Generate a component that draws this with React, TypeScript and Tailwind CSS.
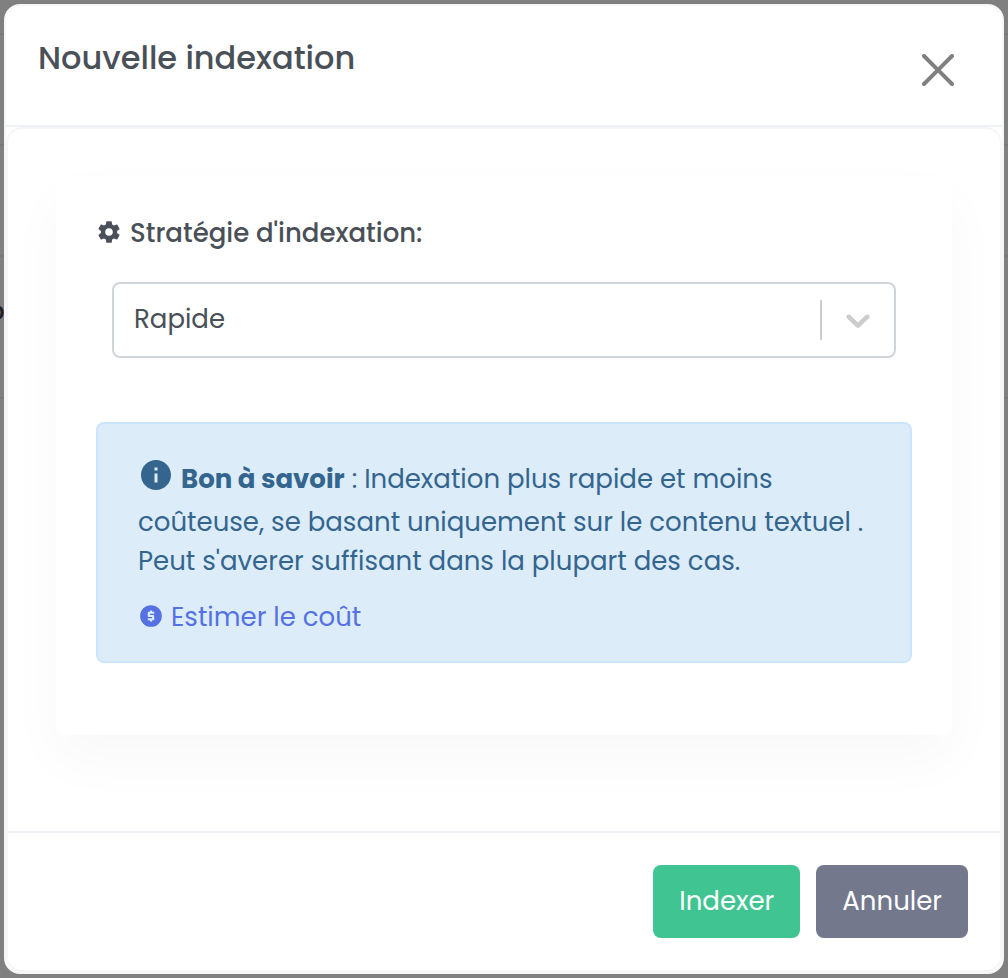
import { useState } from "react";
import { MdInfo } from "react-icons/md";

function CogIcon({ className }: { className: string }) {
  return (
    <svg viewBox="0 0 24 24" fill="currentColor" aria-hidden="true" className={className}>
      <path d="M12,15.5A3.5,3.5 0 0,1 8.5,12A3.5,3.5 0 0,1 12,8.5A3.5,3.5 0 0,1 15.5,12A3.5,3.5 0 0,1 12,15.5M19.43,12.97C19.47,12.65 19.5,12.33 19.5,12C19.5,11.67 19.47,11.34 19.43,11L21.54,9.37C21.73,9.22 21.78,8.95 21.66,8.73L19.66,5.27C19.54,5.05 19.27,4.96 19.05,5.05L16.56,6.05C16.04,5.66 15.5,5.32 14.87,5.07L14.5,2.42C14.46,2.18 14.25,2 14,2H10C9.75,2 9.54,2.18 9.5,2.42L9.13,5.07C8.5,5.32 7.96,5.66 7.44,6.05L4.95,5.05C4.73,4.96 4.46,5.05 4.34,5.27L2.34,8.73C2.21,8.95 2.27,9.22 2.46,9.37L4.57,11C4.53,11.34 4.5,11.67 4.5,12C4.5,12.33 4.53,12.65 4.57,12.97L2.46,14.63C2.27,14.78 2.21,15.05 2.34,15.27L4.34,18.73C4.46,18.95 4.73,19.03 4.95,18.95L7.44,17.94C7.96,18.34 8.5,18.68 9.13,18.93L9.5,21.58C9.54,21.82 9.75,22 10,22H14C14.25,22 14.46,21.82 14.5,21.58L14.87,18.93C15.5,18.67 16.04,18.34 16.56,17.94L19.05,18.95C19.27,19.03 19.54,18.95 19.66,18.73L21.66,15.27C21.78,15.05 21.73,14.78 21.54,14.63L19.43,12.97Z" />
    </svg>
  );
}

function DollarCircleIcon({ className }: { className: string }) {
  return (
    <svg viewBox="0 0 24 24" fill="currentColor" aria-hidden="true" className={className}>
      <path
        fillRule="evenodd"
        d="M12,2A10,10 0 0,1 22,12A10,10 0 0,1 12,22A10,10 0 0,1 2,12A10,10 0 0,1 12,2M11,17H13V16H14A1,1 0 0,0 15,15V12A1,1 0 0,0 14,11H11V10H15V8H13V7H11V8H10A1,1 0 0,0 9,9V12A1,1 0 0,0 10,13H13V14H9V16H11V17Z"
      />
    </svg>
  );
}

function Backdrop() {
  return (
    <div aria-hidden="true" className="absolute inset-0 overflow-hidden bg-[#808080]">
      <div className="absolute inset-x-0 top-[33px] h-[2px] bg-[#797979]" />
      <div className="absolute inset-x-0 top-[144px] h-[2px] bg-[#797979]" />
      <div className="absolute inset-x-0 top-[255px] h-[2px] bg-[#797979]" />
      <div className="absolute inset-x-0 top-[397px] h-[2px] bg-[#797979]" />
      <span className="absolute top-[292px] -left-3 font-medium text-[#1f2021]">o</span>
    </div>
  );
}

export default function App() {
  const [strategy, setStrategy] = useState("rapide");

  return (
    <div className="relative min-h-screen p-1 font-['Poppins','Inter',sans-serif] text-[26px] leading-[39px] text-[#495057]">
      <Backdrop />
      <section
        role="dialog"
        aria-modal="true"
        aria-labelledby="dialog-title"
        className="relative flex min-h-[calc(100vh-8px)] flex-col rounded-2xl border-2 border-[#f6f6f6] bg-white"
      >
        <header className="flex items-start justify-between border-b-2 border-[#eff3f7] px-8 pt-7 pb-[37px]">
          <h1 id="dialog-title" className="text-[32px] leading-[48px] font-medium">
            Nouvelle indexation
          </h1>
          <button type="button" aria-label="Fermer" className="mt-5 mr-4 mb-[2px] cursor-pointer text-[#808080]">
            <svg viewBox="0 0 16 16" fill="currentColor" className="size-8">
              <path d="M.293.293a1 1 0 011.414 0L8 6.586 14.293.293a1 1 0 111.414 1.414L9.414 8l6.293 6.293a1 1 0 01-1.414 1.414L8 9.414l-6.293 6.293a1 1 0 01-1.414-1.414L6.586 8 .293 1.707a1 1 0 010-1.414z" />
            </svg>
          </button>
        </header>

        <div className="flex grow flex-col rounded-2xl border-2 border-[#f6f6f6]">
          <div className="grow px-12 pt-12 pb-24">
            <div className="rounded-lg bg-white px-10 pt-[37px] pb-18 shadow-[0_24px_56px_rgba(0,0,0,0.03)]">
              <label htmlFor="strategy" className="flex items-center gap-2 font-medium">
                <CogIcon className="mb-1 size-[26px]" />
                Stratégie d'indexation:
              </label>

              <div className="mx-4 mt-[29px] grid items-center">
                <select
                  id="strategy"
                  value={strategy}
                  onChange={(event) => setStrategy(event.target.value)}
                  className="col-start-1 row-start-1 h-[76px] w-full appearance-none rounded-lg border-2 border-[#ced4da] bg-white px-5 pb-[2px]"
                >
                  <option value="rapide">Rapide</option>
                </select>
                <div className="pointer-events-none col-start-1 row-start-1 flex items-center justify-self-end pr-[18px] text-[#cccccc]">
                  <span className="mr-4 h-10 w-[2px] bg-[#cccccc]" />
                  <svg viewBox="0 0 20 20" fill="currentColor" className="size-10">
                    <path d="M4.516 7.548c0.436-0.446 1.043-0.481 1.576 0l3.908 3.747 3.908-3.747c0.533-0.481 1.141-0.446 1.574 0 0.436 0.445 0.408 1.197 0 1.615-0.406 0.418-4.695 4.502-4.695 4.502-0.217 0.223-0.502 0.335-0.787 0.335s-0.57-0.112-0.789-0.335c0 0-4.287-4.084-4.695-4.502s-0.436-1.17 0-1.615z" />
                  </svg>
                </div>
              </div>

              <div className="mt-16 rounded-lg border-2 border-[#cce5fb] bg-[#dcedf9] px-10 pt-[33px] pb-[21px] text-[#34658f]">
                <p>
                  <MdInfo className="mr-[7px] mb-[10px] inline size-9 align-[-15px]" />
                  <strong className="font-bold">Bon à savoir</strong> : Indexation plus rapide et moins
                  coûteuse, se basant uniquement sur le contenu textuel . Peut s'averer suffisant dans la plupart des cas.
                </p>
                <a href="#estimation" className="mt-[17px] inline-flex items-center gap-[7px] text-[#5671e3]">
                  <DollarCircleIcon className="mb-1 size-[26px]" />
                  Estimer le coût
                </a>
              </div>
            </div>
          </div>

          <footer className="flex justify-end gap-4 border-t-2 border-[#eff3f7] p-8">
            <button type="button" className="cursor-pointer rounded-lg bg-[#40c592] px-[26px] py-[17px] text-white">
              Indexer
            </button>
            <button type="button" className="cursor-pointer rounded-lg bg-[#74788d] px-[26px] py-[17px] text-white">
              Annuler
            </button>
          </footer>
        </div>
      </section>
    </div>
  );
}
